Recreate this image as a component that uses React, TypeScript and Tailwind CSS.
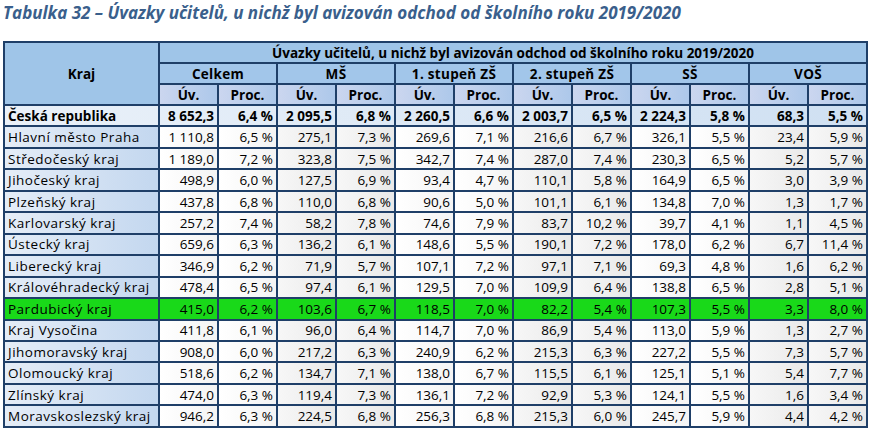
import React from "react";

const groups = ["Celkem", "MŠ", "1. stupeň ZŠ", "2. stupeň ZŠ", "SŠ", "VOŠ"];

const rows: { name: string; v: string[]; highlight?: boolean; total?: boolean }[] = [
  { name: "Česká republika", total: true, v: ["8 652,3", "6,4 %", "2 095,5", "6,8 %", "2 260,5", "6,6 %", "2 003,7", "6,5 %", "2 224,3", "5,8 %", "68,3", "5,5 %"] },
  { name: "Hlavní město Praha", v: ["1 110,8", "6,5 %", "275,1", "7,3 %", "269,6", "7,1 %", "216,6", "6,7 %", "326,1", "5,5 %", "23,4", "5,9 %"] },
  { name: "Středočeský kraj", v: ["1 189,0", "7,2 %", "323,8", "7,5 %", "342,7", "7,4 %", "287,0", "7,4 %", "230,3", "6,5 %", "5,2", "5,7 %"] },
  { name: "Jihočeský kraj", v: ["498,9", "6,0 %", "127,5", "6,9 %", "93,4", "4,7 %", "110,1", "5,8 %", "164,9", "6,5 %", "3,0", "3,9 %"] },
  { name: "Plzeňský kraj", v: ["437,8", "6,8 %", "110,0", "6,8 %", "90,6", "5,0 %", "101,1", "6,1 %", "134,8", "7,0 %", "1,3", "1,7 %"] },
  { name: "Karlovarský kraj", v: ["257,2", "7,4 %", "58,2", "7,8 %", "74,6", "7,9 %", "83,7", "10,2 %", "39,7", "4,1 %", "1,1", "4,5 %"] },
  { name: "Ústecký kraj", v: ["659,6", "6,3 %", "136,2", "6,1 %", "148,6", "5,5 %", "190,1", "7,2 %", "178,0", "6,2 %", "6,7", "11,4 %"] },
  { name: "Liberecký kraj", v: ["346,9", "6,2 %", "71,9", "5,7 %", "107,1", "7,2 %", "97,1", "7,1 %", "69,3", "4,8 %", "1,6", "6,2 %"] },
  { name: "Královéhradecký kraj", v: ["478,4", "6,5 %", "97,4", "6,1 %", "129,5", "7,0 %", "109,9", "6,4 %", "138,8", "6,5 %", "2,8", "5,1 %"] },
  { name: "Pardubický kraj", highlight: true, v: ["415,0", "6,2 %", "103,6", "6,7 %", "118,5", "7,0 %", "82,2", "5,4 %", "107,3", "5,5 %", "3,3", "8,0 %"] },
  { name: "Kraj Vysočina", v: ["411,8", "6,1 %", "96,0", "6,4 %", "114,7", "7,0 %", "86,9", "5,4 %", "113,0", "5,9 %", "1,3", "2,7 %"] },
  { name: "Jihomoravský kraj", v: ["908,0", "6,0 %", "217,2", "6,3 %", "240,9", "6,2 %", "215,3", "6,3 %", "227,2", "5,5 %", "7,3", "5,7 %"] },
  { name: "Olomoucký kraj", v: ["518,6", "6,2 %", "134,7", "7,1 %", "138,0", "6,7 %", "115,5", "6,1 %", "125,1", "5,1 %", "5,4", "7,7 %"] },
  { name: "Zlínský kraj", v: ["474,0", "6,3 %", "119,4", "7,3 %", "136,1", "7,2 %", "92,9", "5,3 %", "124,1", "5,5 %", "1,6", "3,4 %"] },
  { name: "Moravskoslezský kraj", v: ["946,2", "6,3 %", "224,5", "6,8 %", "256,3", "6,8 %", "215,3", "6,0 %", "245,7", "5,9 %", "4,4", "4,2 %"] },
];

const bd = "border-2 border-[#1f3f68]";

export default function App() {
  return (
    <div className="bg-white w-[871px] h-[434px] overflow-hidden pl-[3px]" style={{ fontFamily: '"Open Sans", "Noto Sans", sans-serif' }}>
      <h1 className="h-[28px] pt-[2px] text-[17px] leading-[22px] font-bold italic text-[#3a5f8c]">
        Tabulka 32 – Úvazky učitelů, u nichž byl avizován odchod od školního roku 2019/2020
      </h1>
      <table className={`mt-[13px] h-[387px] border-collapse ${bd} text-[13.5px] leading-[16px] text-black w-[863px] table-fixed`}>
        <colgroup>
          <col className="w-[155px]" />
          {Array.from({ length: 12 }).map((_, i) => (
            <col key={i} className="w-[59px]" />
          ))}
        </colgroup>
        <thead className="font-bold">
          <tr className="h-[21px] bg-[#9fc5e8]">
            <th rowSpan={3} className={`${bd} font-bold text-center`}>Kraj</th>
            <th colSpan={12} className={`${bd} font-bold text-center`}>
              Úvazky učitelů, u nichž byl avizován odchod od školního roku 2019/2020
            </th>
          </tr>
          <tr className="h-[21px] bg-[#a2c6ea]">
            {groups.map((g) => (
              <th key={g} colSpan={2} className={`${bd} font-bold text-center tracking-[0.3px]`}>{g}</th>
            ))}
          </tr>
          <tr className="h-[21px]">
            {groups.map((g) => (
              <React.Fragment key={g}>
                <th className={`${bd} font-bold text-center bg-gradient-to-r from-[#cbd6ef] to-[#adc8ea]`}>Úv.</th>
                <th className={`${bd} font-bold text-center bg-gradient-to-r from-[#cbd6ef] to-[#adc8ea]`}>Proc.</th>
              </React.Fragment>
            ))}
          </tr>
        </thead>
        <tbody>
          {rows.map((r) => (
            <tr
              key={r.name}
              className={
                "h-[21px] " +
                (r.highlight
                  ? "bg-[#19d919]"
                  : r.total
                  ? "bg-gradient-to-r from-[#eaf1f9] to-[#cfe0f2] font-bold"
                  : "")
              }
            >
              <td
                className={`${bd} px-[3px] text-left whitespace-nowrap ${r.total ? "" : "tracking-[0.5px]"} ${
                  r.highlight || r.total ? "" : "bg-gradient-to-r from-[#e5edf7] to-[#c3d7ef]"
                }`}
              >
                {r.name}
              </td>
              {r.v.map((val, i) => {
                const gray = Math.floor(i / 2) % 2 === 1;
                const bg = r.highlight || r.total ? "" : gray ? "bg-gradient-to-r from-[#f7f7f7] to-[#e9e9e9]" : "bg-gradient-to-r from-white to-[#f4f4f4]";
                return (
                  <td key={i} className={`${bd} px-[3px] text-right whitespace-nowrap ${bg}`}>
                    {val}
                  </td>
                );
              })}
            </tr>
          ))}
        </tbody>
      </table>
    </div>
  );
}
